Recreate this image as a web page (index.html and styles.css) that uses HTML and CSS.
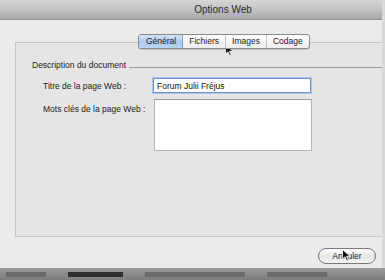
FILE: index.html
```html
<!DOCTYPE html>
<html lang="fr">
<head>
    <meta charset="UTF-8">
    <title>Options Web</title>
    <link rel="stylesheet" href="styles.css">
</head>
<body>
    <div class="window">
        <div class="titlebar">Options Web</div>
        <div class="content">
            <div class="tabs">
                <span class="tab active">Général</span>
                <span class="tab">Fichiers</span>
                <span class="tab">Images</span>
                <span class="tab last">Codage</span>
            </div>
            <div class="panel">
                <div class="legend">
                    <span>Description du document</span>
                    <div class="legend-line"></div>
                </div>
                <div class="row">
                    <label class="label">Titre de la page Web :</label>
                    <input class="field" type="text" value="Forum Julii Fréjus">
                </div>
                <div class="row">
                    <label class="label">Mots clés de la page Web :</label>
                    <textarea class="area"></textarea>
                </div>
            </div>
            <div class="footer">
                <button class="btn">Annuler</button>
            </div>
        </div>
    </div>
    <div class="desktop">
        <span class="blk b1"></span><span class="blk b2"></span><span class="blk b3"></span><span class="blk b4"></span>
    </div>

    <svg class="cursor cursor-tabs" width="9" height="13" viewBox="0 0 9 13">
        <path d="M0.5 0.5 L0.5 10 L3 7.8 L4.8 12 L6.3 11.3 L4.6 7.3 L8 7.3 Z" fill="#111" stroke="#fff" stroke-width="0.8"/>
    </svg>
    <svg class="cursor cursor-btn" width="9" height="13" viewBox="0 0 9 13">
        <path d="M0.5 0.5 L0.5 10 L3 7.8 L4.8 12 L6.3 11.3 L4.6 7.3 L8 7.3 Z" fill="#111" stroke="#fff" stroke-width="0.8"/>
    </svg>
</body>
</html>
```

FILE: styles.css
```css
body {
    margin: 0;
    width: 385px;
    height: 280px;
    overflow: hidden;
    background-color: #3a3a3a;
    font-family: "Liberation Sans", Arial, sans-serif;
    font-size: 8.5px;
    color: #222;
    position: relative;
}
.window {
    height: 268px;
    background-color: #ebebeb;
    display: flex;
    flex-direction: column;
    border-right: 3px solid #d9d9d9;
    box-sizing: border-box;
}
.titlebar {
    height: 20px;
    box-sizing: border-box;
    padding-left: 64px;
    text-align: center;
    line-height: 19px;
    font-size: 10px;
    color: #2a2a2a;
    background: linear-gradient(#d6d6d6, #bdbdbd 60%, #a9a9a9);
    border-bottom: 1px solid #8c8c8c;
}
.content {
    flex: 1;
    display: flex;
    flex-direction: column;
    padding: 14px 0 5px 15px;
    position: relative;
}
.tabs {
    display: flex;
    align-self: flex-start;
    margin-left: 123px;
    height: 13px;
    border: 1px solid #8a8a8a;
    border-radius: 3px;
    background: linear-gradient(#ffffff, #ededed);
    position: relative;
    z-index: 1;
    margin-bottom: -7px;
    box-shadow: 0 1px 1px rgba(0, 0, 0, 0.15);
}
.tab {
    line-height: 13px;
    padding: 0 6px;
    font-size: 8.5px;
    color: #222;
    border-right: 1px solid #c4c4c4;
}
.tab.last {
    border-right: none;
}
.tab.active {
    padding: 0 6px 0 7px;
    background: linear-gradient(#d6e6f8, #a9c9ef 55%, #bcd6f5);
    border-radius: 2px 0 0 2px;
    border-right-color: #7f9cc4;
}
.panel {
    height: 195px;
    border: 1px solid #c6c6c6;
    border-right: none;
    background-color: #e5e5e5;
    padding: 17px 0 0 16px;
    box-sizing: border-box;
}
.legend {
    display: flex;
    align-items: center;
    gap: 3px;
    margin-bottom: 8px;
}
.legend-line {
    flex: 1;
    height: 1px;
    background-color: #9a9a9a;
    margin-top: 4px;
}
.row {
    display: flex;
    margin-left: 11px;
    margin-bottom: 8px;
}
.label {
    width: 110px;
    padding-top: 3px;
}
.field {
    width: 158px;
    height: 15px;
    box-sizing: border-box;
    border: 1px solid #6f93c9;
    box-shadow: 0 0 0 1px #a9c6ec;
    padding: 0 3px;
    font-family: "Liberation Sans", Arial, sans-serif;
    font-size: 8.5px;
    color: #111;
    background-color: #fff;
    outline: none;
}
.area {
    width: 158px;
    height: 52px;
    box-sizing: border-box;
    border: 1px solid #b5b5b5;
    border-top-color: #9c9c9c;
    background-color: #fff;
    resize: none;
    margin: -2px 0 0 1px;
}
.footer {
    display: flex;
    justify-content: flex-end;
    padding: 11px 6px 0 0;
}
.btn {
    width: 58px;
    height: 16px;
    border: 1px solid #7a7a7a;
    border-radius: 8px;
    background: linear-gradient(#ffffff, #e6e6e6 50%, #f4f4f4);
    font-family: "Liberation Sans", Arial, sans-serif;
    font-size: 8.5px;
    color: #222;
    padding: 0;
}
.desktop {
    height: 12px;
    display: flex;
    align-items: center;
    gap: 22px;
    padding-left: 6px;
    background: linear-gradient(#9a9a9a, #7c7c7c);
}
.blk {
    height: 5px;
    background-color: #5e5e5e;
    opacity: 0.7;
}
.b1 { width: 40px; }
.b2 { width: 55px; background-color: #2e2e2e; opacity: 1; }
.b3 { width: 100px; }
.b4 { width: 60px; }
.cursor {
    position: absolute;
}
.cursor-tabs {
    left: 225px;
    top: 44px;
}
.cursor-btn {
    left: 342px;
    top: 249px;
}
```
